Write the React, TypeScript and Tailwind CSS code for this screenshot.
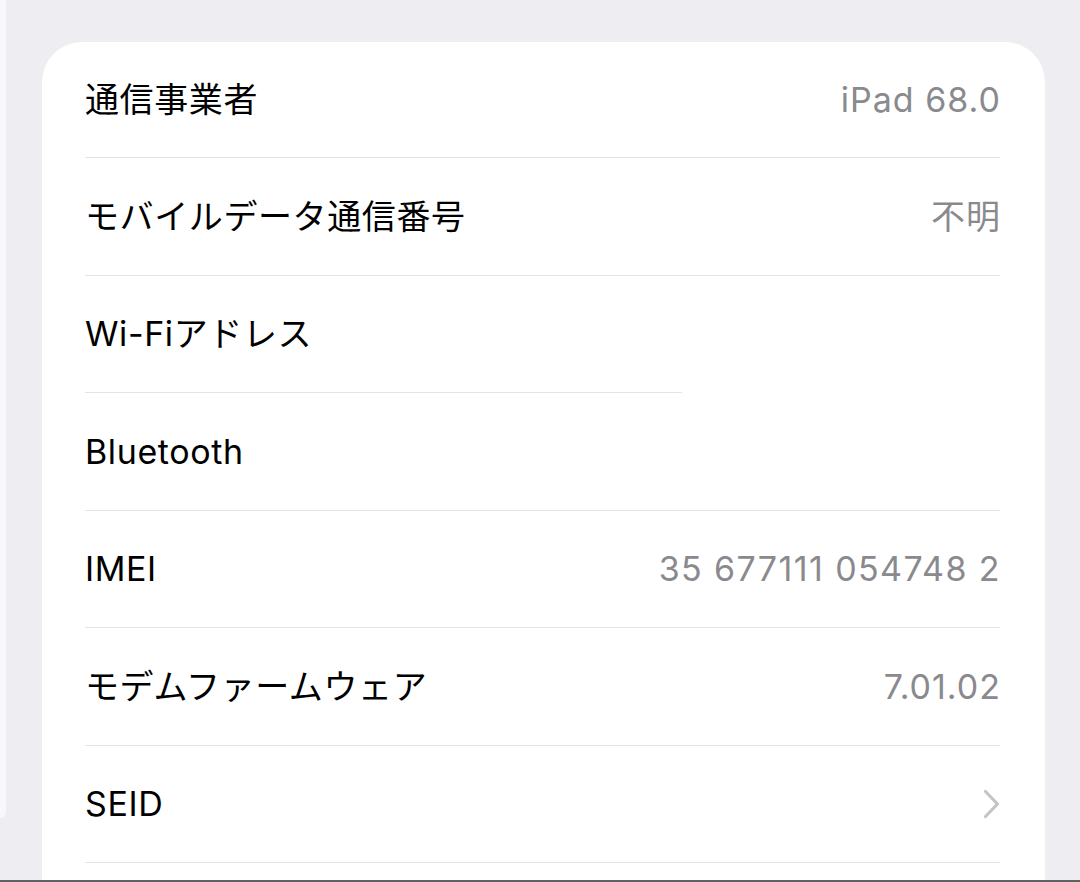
type Row = {
  label: string;
  value?: string;
  chevron?: boolean;
  shortRule?: boolean;
};

const rows: Row[] = [
  { label: "通信事業者", value: "iPad 68.0" },
  { label: "モバイルデータ通信番号", value: "不明" },
  { label: "Wi-Fiアドレス", shortRule: true },
  { label: "Bluetooth" },
  { label: "IMEI", value: "35 677111 054748 2" },
  { label: "モデムファームウェア", value: "7.01.02" },
  { label: "SEID", chevron: true },
];

function Chevron() {
  return (
    <svg width="18" height="30" viewBox="0 0 18 30" className="mr-[-1px]" fill="none">
      <path
        d="M2.5 2.5 L14.5 15 L2.5 27.5"
        stroke="#c4c4c8"
        strokeWidth="3.2"
        strokeLinecap="round"
        strokeLinejoin="round"
      />
    </svg>
  );
}

export default function App() {
  return (
    <div
      className="flex h-[882px] w-[1080px] flex-col overflow-hidden bg-[#ededf2] text-black"
      style={{ fontFamily: 'Inter, "Noto Sans CJK JP", sans-serif' }}
    >
      <div className="flex min-h-0 flex-1">
        {/* edge of the sidebar column */}
        <div className="h-[818px] w-[6px] shrink-0 rounded-br-[6px] bg-[#f8f8fb]" />

        <div className="min-w-0 flex-1 pl-[36px] pr-[35px] pt-[42px]">
          <div className="h-full rounded-t-[40px] bg-white pl-[43px] pr-[45px]">
            {rows.map((row, i) => (
              <div
                key={row.label}
                className={`relative flex items-center justify-between ${
                  i === 0 ? "h-[116px]" : "h-[117.5px]"
                }`}
              >
                <span className="text-[34px] leading-none tracking-[0.6px]">
                  {row.label}
                </span>
                {row.value && (
                  <span
                    className={`mr-[-1px] text-[34px] leading-none text-[#8a8a8e] ${
                      row.label === "IMEI" ? "tracking-[1.4px]" : "tracking-[1px]"
                    }`}
                  >
                    {row.value}
                  </span>
                )}
                {row.chevron && <Chevron />}
                <div
                  className={`absolute bottom-0 left-0 h-px bg-[#e3e3e6] ${
                    row.shortRule ? "w-[597px]" : "w-full"
                  }`}
                />
              </div>
            ))}
          </div>
        </div>
      </div>
      <div className="h-[2px] w-full shrink-0 bg-[#616161]" />
    </div>
  );
}
